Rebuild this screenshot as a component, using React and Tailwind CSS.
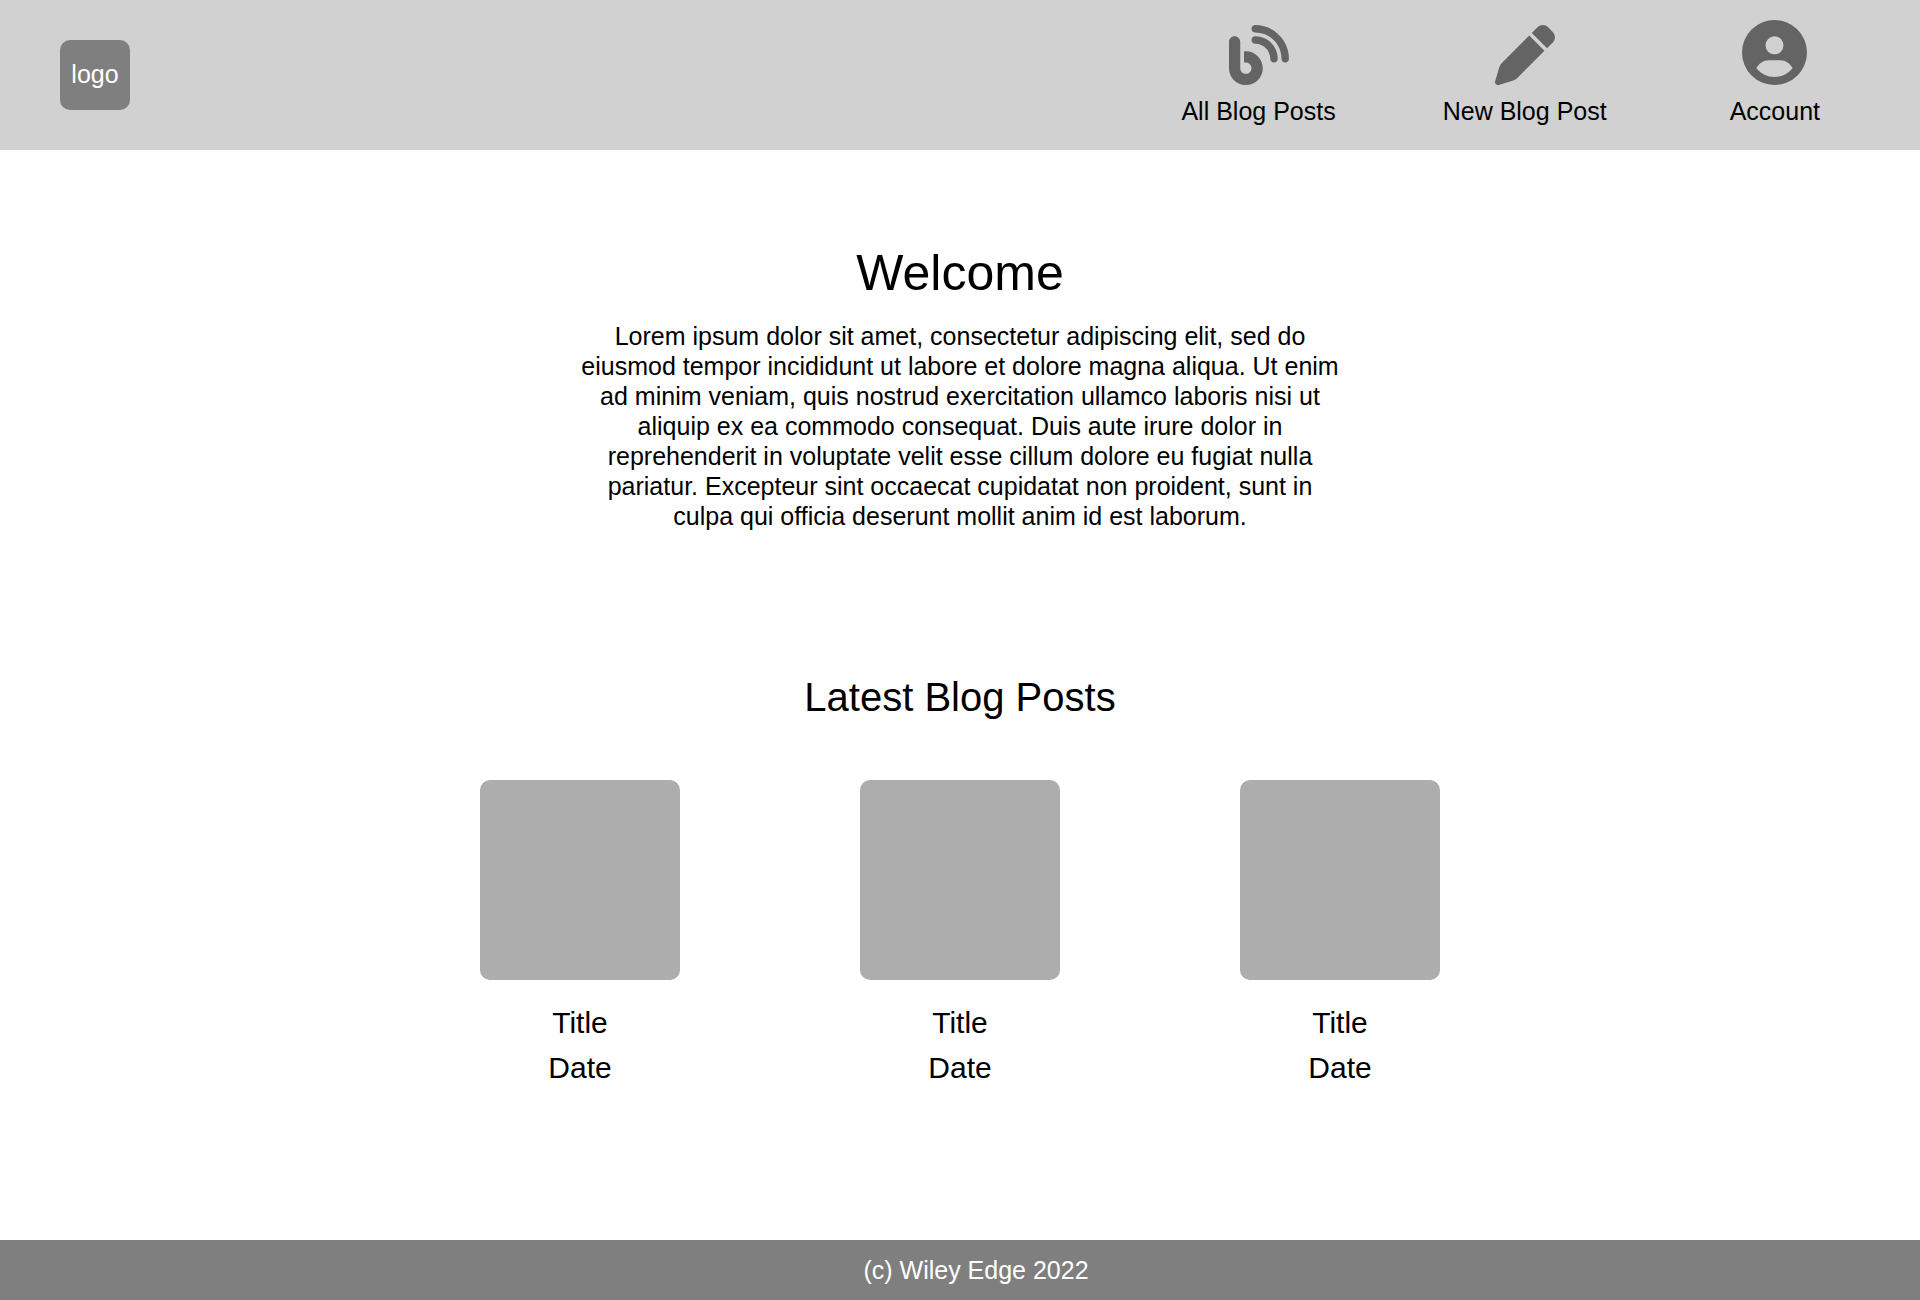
import { FaBlog, FaPen } from "react-icons/fa6";

function AccountIcon() {
  return (
    <svg viewBox="0 0 195 195" className="size-[65px]" fill="currentColor" aria-hidden="true">
      <path
        fillRule="evenodd"
        d="M97.5 0a97.5 97.5 0 1 0 0 195a97.5 97.5 0 1 0 0-195zM97.5 49a27 27 0 1 1 0 54a27 27 0 1 1 0-54zM43 145C51 130 64 121 81 121H114C131 121 144 130 152 145A70 70 0 0 1 43 145z"
      />
    </svg>
  );
}

function NavItem({ icon, label, className }) {
  return (
    <a href="#" className={`flex flex-col items-center justify-end gap-[11px] ${className}`}>
      <span className="text-[#646464]">{icon}</span>
      <span className="whitespace-nowrap text-[25px] leading-[30px]">{label}</span>
    </a>
  );
}

function PostCard({ title, date }) {
  return (
    <article className="flex flex-col items-center text-[30px] leading-[35px]">
      <div className="size-[200px] rounded-[10px] bg-[#adadad]" />
      <h3 className="mt-[25px]">{title}</h3>
      <p className="mt-2.5">{date}</p>
    </article>
  );
}

const posts = [
  { id: 1, title: "Title", date: "Date" },
  { id: 2, title: "Title", date: "Date" },
  { id: 3, title: "Title", date: "Date" },
];

export default function App() {
  return (
    <div className="flex min-h-screen flex-col bg-white font-['Liberation_Sans',Arial,sans-serif] text-black">
      <header className="flex items-center justify-between bg-[#d1d1d1] pl-[60px] pr-[84px]">
        <a
          href="#"
          className="flex size-[70px] items-center justify-center rounded-[10px] bg-[#7f7f7f] pb-0.5 text-[25px] leading-[30px] text-white"
        >
          logo
        </a>
        <nav className="flex h-[150px] gap-[107px] pb-6">
          <NavItem icon={<FaBlog className="size-[60px]" />} label="All Blog Posts" className="" />
          <NavItem icon={<FaPen className="size-[60px]" />} label="New Blog Post" className="" />
          <NavItem icon={<AccountIcon />} label="Account" className="px-4" />
        </nav>
      </header>

      <main className="flex flex-1 flex-col items-center">
        <section className="mt-[93px] flex w-full max-w-[770px] flex-col items-center text-center">
          <h1 className="text-[50px] leading-[60px]">Welcome</h1>
          <p className="mt-[18px] text-[25px] leading-[30px]">
            Lorem ipsum dolor sit amet, consectetur adipiscing elit, sed do eiusmod tempor incididunt ut labore et
            dolore magna aliqua. Ut enim ad minim veniam, quis nostrud exercitation ullamco laboris nisi ut aliquip ex
            ea commodo consequat. Duis aute irure dolor in reprehenderit in voluptate velit esse cillum dolore eu fugiat
            nulla pariatur. Excepteur sint occaecat cupidatat non proident, sunt in culpa qui officia deserunt mollit
            anim id est laborum.
          </p>
        </section>

        <section className="mt-[141px] flex w-full max-w-[960px] flex-col">
          <h2 className="text-center text-[40px] leading-[50px]">Latest Blog Posts</h2>
          <div className="mt-[58px] flex justify-between">
            {posts.map((post) => (
              <PostCard key={post.id} title={post.title} date={post.date} />
            ))}
          </div>
        </section>
      </main>

      <footer className="bg-[#7f7f7f] py-[15px] pl-8 text-center text-[25px] leading-[30px] text-white">
        (c) Wiley Edge 2022
      </footer>
    </div>
  );
}
